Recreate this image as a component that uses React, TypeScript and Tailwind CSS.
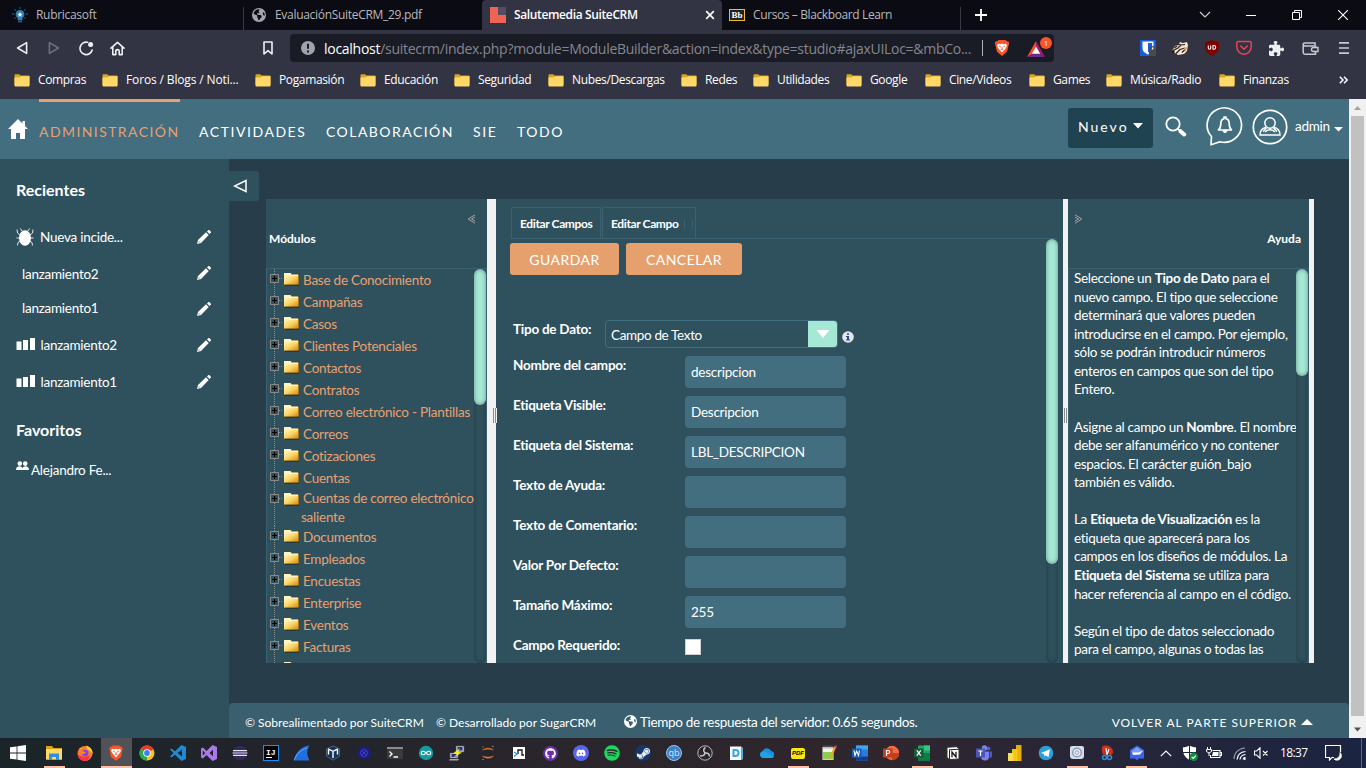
import type { ReactNode } from "react";
import { FaSpotify, FaDiscord, FaGithub, FaSteamSymbol, FaEarthAmericas, FaPuzzlePiece } from "react-icons/fa6";

type SvgProps = { w?: number; h?: number; vb?: string; className?: string; children: ReactNode };

function Svg({ w = 16, h = 16, vb, className = "", children }: SvgProps) {
  return (
    <svg width={w} height={h} viewBox={vb ?? `0 0 ${w} ${h}`} className={`shrink-0 ${className}`} fill="none">
      {children}
    </svg>
  );
}

/* ---------- Browser chrome ---------- */

function TabStrip() {
  return (
    <div className="flex h-[30px] shrink-0 bg-[#0b0b14] text-[12px] text-[#b9b9bd]">
      <div className="flex w-[243px] items-center pl-[12px]">
        <Svg>
          <path d="M8 0v2M2.6 2.2l1.3 1.3M13.4 2.2l-1.3 1.3M0 7h2.2M13.8 7H16M2.4 11.6l1.2-1M13.6 11.6l-1.2-1" stroke="#1d4e74" strokeWidth="1.3" />
          <path d="M8 3a4.3 4.3 0 0 0-2.4 7.9V13h4.8v-2.1A4.3 4.3 0 0 0 8 3z" fill="#2e7fb8" />
          <path d="M8 5l.8 1.7 1.7.1-1.3 1.2.4 1.8L8 8.9l-1.6.9.4-1.8-1.3-1.2 1.7-.1z" fill="#fff" />
          <path d="M6 13.4h4v2H6z" fill="#1d5f92" />
        </Svg>
        <span className="ml-[8px] tracking-[-0.3px]">Rubricasoft</span>
      </div>
      <div className="mt-[7px] w-px bg-[#3a3a45]" />
      <div className="flex w-[238px] items-center pl-[8px]">
        <FaEarthAmericas size={14} color="#a4a6ad" />
        <span className="ml-[9px] tracking-[-0.3px]">EvaluaciónSuiteCRM_29.pdf</span>
      </div>
      <div className="flex w-[240px] items-center rounded-t-[4px] bg-[#323443] pl-[8px] pr-[7px] font-semibold text-white">
        <Svg>
          <path d="M0 0h16v16H0z" fill="#ee6352" />
          <path d="M8 0h8v8H8z" fill="#544c63" />
        </Svg>
        <span className="ml-[8px] flex-1 tracking-[-0.37px]">Salutemedia SuiteCRM</span>
        <Svg w={10} h={10}>
          <path d="M1.2 1.2l7.6 7.6M8.8 1.2L1.2 8.8" stroke="#fff" strokeWidth="1.7" />
        </Svg>
      </div>
      <div className="flex w-[238px] items-center pl-[7px]">
        <div className="flex h-[12px] w-[16px] items-center justify-center border border-[#f0b73c] bg-[#222] font-['Liberation_Serif',serif] text-[9px] font-bold leading-none text-white">
          Bb
        </div>
        <span className="ml-[8px] tracking-[-0.39px]">Cursos – Blackboard Learn</span>
      </div>
      <div className="mt-[7px] w-px bg-[#3a3a45]" />
      <div className="flex flex-1 items-center pl-[14px]">
        <Svg w={12} h={12}>
          <path d="M6 0v12M0 6h12" stroke="#fff" strokeWidth="1.8" />
        </Svg>
        <Svg w={12} h={8} className="ml-[212px]">
          <path d="M1 1l5 5 5-5" stroke="#d0d0d4" strokeWidth="1.1" />
        </Svg>
        <Svg w={10} h={10} className="ml-[35px]">
          <path d="M0 5.5h10" stroke="#fff" />
        </Svg>
        <Svg w={10} h={10} className="ml-[36px]">
          <path d="M.5 2.5h7v7h-7zM2.5 2.5v-2h7v7h-2" stroke="#fff" />
        </Svg>
        <Svg w={10} h={10} className="ml-[36px]">
          <path d="M0 0l10 10M10 0L0 10" stroke="#fff" strokeWidth="1.1" />
        </Svg>
      </div>
    </div>
  );
}

function Toolbar() {
  return (
    <div className="flex h-[36px] shrink-0 items-center bg-[#323443]">
      <Svg w={12} h={14} className="ml-[16px]">
        <path d="M10.6 1.6v10.8L1.6 7z" stroke="#f0f0f2" strokeWidth="1.6" strokeLinejoin="round" />
      </Svg>
      <Svg w={12} h={14} className="ml-[20px]">
        <path d="M1.4 1.6v10.8L10.4 7z" stroke="#6e707c" strokeWidth="1.6" strokeLinejoin="round" />
      </Svg>
      <Svg w={15} h={15} className="ml-[19px]">
        <path d="M8.500 1.300A6.200 6.200 0 1 0 13.200 9" stroke="#f0f0f2" strokeWidth="1.6" strokeLinecap="round" />
        <circle cx="11.600" cy="3.400" r="2.500" fill="#f0f0f2" />
      </Svg>
      <Svg w={15} h={15} className="ml-[16px]">
        <path d="M1 7.2l6.5-5.9L14 7.2M2.8 6v7.6h3V10.300a1.700 1.700 0 0 1 3.400 0v3.300h3V6" stroke="#f0f0f2" strokeWidth="1.6" strokeLinecap="round" strokeLinejoin="round" />
      </Svg>
      <Svg w={10} h={14} className="ml-[138px]">
        <path d="M1 1h8v12l-4-3.400L1 13z" stroke="#f0f0f2" strokeWidth="1.6" strokeLinejoin="round" />
      </Svg>
      <div className="ml-[17px] flex h-[28px] w-[764px] items-center rounded-[4px] bg-[#1a1c25] pl-[11px]">
        <Svg w={14} h={14}>
          <circle cx="7" cy="7" r="7" fill="#a0a2ac" />
          <path d="M7 2.800v5M7 9.400v2" stroke="#1a1c25" strokeWidth="2" />
        </Svg>
        <div className="ml-[9px] w-[658px] whitespace-nowrap text-[14px] tracking-[-0.28px] text-[#85868f]">
          <span className="text-white">localhost</span>
          /suitecrm/index.php?module=ModuleBuilder&amp;action=index&amp;type=studio#ajaxUILoc=&amp;mbCo...
        </div>
        <div className="h-[16px] w-px bg-[#b0b1b8]" />
        <Svg w={16} h={18} className="ml-[11px]">
          <path d="M4.500 1h7l1.300 1.300 1.700.2.700 2-.7 2L13 12.800 8 17l-5-4.200L1.500 6.500l-.7-2 .7-2 1.700-.2z" fill="#fb542b" />
          <path d="M4 4.800l2.500.4L8 4.600l1.500.6 2.500-.4 1 2-1.800 3.200L8 13.500 4.800 10 3 6.800z" fill="#fff" />
          <path d="M5 7l1.800.8M11 7l-1.800.8M8 8v2M6.500 11L8 10l1.500 1" stroke="#fb542b" strokeWidth=".9" />
        </Svg>
        <div className="relative ml-[16px] h-[20px] w-[27px]">
          <Svg w={20} h={18} className="mt-[2px]">
            <path d="M10 1L1 17l9-5z" fill="#ff4724" />
            <path d="M10 1l9 16-9-5z" fill="#9e1f63" />
            <path d="M1 17h18l-9-5z" fill="#662d91" />
            <path d="M10 6.500l4.200 7.200H5.800z" fill="#fff" />
          </Svg>
          <div className="absolute -top-[1px] left-[14px] flex h-[12px] w-[12px] items-center justify-center rounded-full bg-[#fb542b] text-[8px] leading-none text-white">1</div>
        </div>
      </div>
      <Svg className="ml-[86px]">
        <path d="M0 0h16v16H0z" fill="#175ddc" />
        <path d="M2.500 1.500h11v7c0 3-3 4.800-5.500 6-2.500-1.200-5.500-3-5.500-6z" fill="#fff" />
        <path d="M8 3h4v5c0 2-2 3.500-4 4.500z" fill="#175ddc" />
        <path d="M9 9.500h7V16H9z" fill="#4a4a4a" />
        <path d="M10.700 10V8.500a1.800 1.800 0 0 1 3.600 0V10" stroke="#4a4a4a" strokeWidth="1.300" />
      </Svg>
      <Svg className="ml-[16px]">
        <path d="M0 11l3-5 3-1 2-3 3 1 4-1 1 3-1 6-3 3-6 1z" fill="#f4e3cf" />
        <path d="M1 10.500l5-2.500 3-3 4-.5M4 13.500l4-4 5-1.500M5.500 5l3-1M10 12.500l4-4M2.500 8l2.500-2" stroke="#2b211b" strokeWidth="1.200" />
        <path d="M0 10.500h2.500v2H0z" fill="#111" />
        <path d="M11.500 8.500l3.500-1.500-1.500 4.500z" fill="#d69a63" />
      </Svg>
      <Svg className="ml-[16px]">
        <path d="M8 0c2 1 4 2 7 2 0 7 0 10-7 14C1 12 1 9 1 2c3 0 5-1 7-2z" fill="#800000" />
        <path d="M4.300 5.500V8a1.200 1.200 0 0 0 2.400 0V5.500M9 5.500v3.800h.8a1.900 1.900 0 0 0 0-3.800z" stroke="#fff" strokeWidth="1.100" />
      </Svg>
      <Svg className="ml-[16px]">
        <path d="M2 1.500h12a1.200 1.200 0 0 1 1.200 1.200V7A7.200 7.200 0 0 1 .8 7V2.700A1.200 1.200 0 0 1 2 1.500z" stroke="#ef4056" strokeWidth="1.500" />
        <path d="M4.700 6L8 9.200 11.300 6" stroke="#ef4056" strokeWidth="1.600" strokeLinecap="round" strokeLinejoin="round" />
      </Svg>
      <FaPuzzlePiece size={15} color="#f0f0f2" className="ml-[17px] shrink-0" />
      <Svg w={17} h={15} className="ml-[18px]">
        <path d="M13 4V2H3a1.500 1.500 0 0 0-1.800 1.600V11.500A1.800 1.800 0 0 0 3 13.200h10.500V10M1.200 3.600C1.300 4.600 2 5 3 5h10.500v1.500" stroke="#c9cad0" strokeWidth="1.500" />
        <path d="M16 6.500h-4.500a2 2 0 0 0 0 4H16z" stroke="#c9cad0" strokeWidth="1.400" />
      </Svg>
      <Svg w={10} h={14} className="ml-[20px]">
        <path d="M0 1.800h10M0 7h10M0 12.200h10" stroke="#c9cad0" strokeWidth="1.700" />
      </Svg>
    </div>
  );
}

const bookmarks: { label: string; cls: string }[] = [
  { label: "Compras", cls: "w-[88px]" },
  { label: "Foros / Blogs / Noti...", cls: "w-[153px]" },
  { label: "Pogamasión", cls: "w-[105px]" },
  { label: "Educación", cls: "w-[94px]" },
  { label: "Seguridad", cls: "w-[94px]" },
  { label: "Nubes/Descargas", cls: "w-[133px]" },
  { label: "Redes", cls: "w-[72px]" },
  { label: "Utilidades", cls: "w-[93px]" },
  { label: "Google", cls: "w-[79px]" },
  { label: "Cine/Videos", cls: "w-[104px]" },
  { label: "Games", cls: "w-[77px]" },
  { label: "Música/Radio", cls: "w-[113px]" },
  { label: "Finanzas", cls: "w-[118px]" },
];

function BookmarksBar() {
  return (
    <div className="flex h-[33px] shrink-0 items-center bg-[#323443] pb-[5px] pl-[14px] text-[12px] text-white">
      {bookmarks.map((b) => (
        <div key={b.label} className={`flex shrink-0 items-center ${b.cls}`}>
          <Svg w={16} h={13}>
            <path d="M.5 1A.8.8 0 0 1 1.300.3h3.900L6.500 1.500h8.200a.8.8 0 0 1 .8.800V11H.5z" fill="#d9a420" />
            <path d="M.5 3.500L6 3.200l1-.9h8.500v9.400a.8.8 0 0 1-.8.800H1.300a.8.8 0 0 1-.8-.8z" fill="#ffd867" />
          </Svg>
          <span className={b.label.startsWith("Foros") ? "ml-[8px] whitespace-nowrap tracking-[-0.14px]" : "ml-[8px] whitespace-nowrap tracking-[-0.36px]"}>{b.label}</span>
        </div>
      ))}
      <Svg w={9} h={8} className="ml-[2px]">
        <path d="M.8.8L4 4 .8 7.200M5 .8L8.200 4 5 7.200" stroke="#fff" strokeWidth="1.500" />
      </Svg>
    </div>
  );
}

/* ---------- Application header ---------- */

function NavBar() {
  return (
    <div className="flex h-[60px] shrink-0 items-start bg-[#426e80] text-[14px] leading-[20px] text-white">
      <Svg w={20} h={20} className="ml-[8px] mt-[20px]">
        <path d="M10 0L0 10h3v10h5v-6h4v6h5V10h3L17 7V2h-2.500v2.500z" fill="#fff" />
      </Svg>
      <div className="ml-[11px] w-[141px] whitespace-nowrap border-t-[3px] border-[#e8a071] pt-[20px] tracking-[1.420px] text-[#e8a071]">ADMINISTRACIÓN</div>
      <div className="ml-[19px] w-[127px] whitespace-nowrap pt-[23px] tracking-[1.550px]">ACTIVIDADES</div>
      <div className="w-[147px] whitespace-nowrap pt-[23px] tracking-[1.450px]">COLABORACIÓN</div>
      <div className="w-[44px] pt-[23px] tracking-[1.600px]">SIE</div>
      <div className="flex-1 pt-[23px] tracking-[1.500px]">TODO</div>
      <div className="mt-[9px] flex h-[40px] w-[85px] items-center rounded-[3px] bg-[#204352] pl-[10px] pb-[3px] tracking-[2px]">
        <span className="w-[55px]">Nuevo</span>
        <Svg w={10} h={6} className="mb-[1px]">
          <path d="M0 0h10L5 5.500z" fill="#fff" />
        </Svg>
      </div>
      <Svg w={22} h={22} className="ml-[12px] mt-[17px]">
        <circle cx="8" cy="8" r="6.700" stroke="#fff" strokeWidth="1.800" />
        <path d="M12.800 12.800l2.200 2" stroke="#fff" strokeWidth="1.800" />
        <path d="M15.500 15.200l3.700 3.300" stroke="#fff" strokeWidth="4" strokeLinecap="round" />
      </Svg>
      <Svg w={38} h={42} className="ml-[19px] mt-[7px]">
        <path d="M5.500 30.500A17.200 17.200 0 1 1 14 35.700L5 38.800z" stroke="#fff" strokeWidth="1.700" strokeLinejoin="round" />
        <path d="M12.500 24c2-1.700 2.200-3.300 2.300-6.300.1-2.800 1.400-4.600 3.200-5V11h2v1.700c1.800.4 3.100 2.200 3.200 5 .1 3 .3 4.600 2.300 6.300z" stroke="#fff" strokeWidth="1.700" strokeLinejoin="round" />
        <path d="M17 24.500h4a2 2 0 0 1-4 0z" fill="#fff" stroke="#fff" />
      </Svg>
      <Svg w={36} h={36} className="ml-[8px] mt-[10px]">
        <circle cx="18" cy="18" r="16.700" stroke="#fff" strokeWidth="1.700" />
        <circle cx="18" cy="14" r="5.200" stroke="#fff" strokeWidth="1.500" />
        <path d="M14 18.200c-4 1-6 4-6 7.800h20c0-3.800-2-6.800-6-7.800M11 22.500l3.500-3.500M25 22.500L21.500 19M13 23c2-3 8-3 10 0" stroke="#fff" strokeWidth="1.400" />
      </Svg>
      <span className="ml-[7px] w-[39px] pt-[17px] text-[13.500px] tracking-[-0.250px]">admin</span>
      <Svg w={9} h={5} className="mr-[6px] mt-[28px]">
        <path d="M0 0h9L4.500 4.500z" fill="#fff" />
      </Svg>
    </div>
  );
}

/* ---------- Sidebar ---------- */

function Pencil() {
  return (
    <Svg w={14} h={14}>
      <path d="M0 14l1-4L9 2.300l2.700 2.700L4 13z" fill="#fff" />
      <path d="M10 1.400L11.200.3c.4-.3.900-.3 1.300 0l1.200 1.200c.4.400.4.900 0 1.300l-1.100 1.200z" fill="#fff" />
      <path d="M1.300 12.700l.6-1.500.9.900z" fill="#2f515d" />
    </Svg>
  );
}

function Bars() {
  return (
    <Svg w={20} h={13} className="mr-[5px]">
      <path d="M.5 3.500h5V12h-5zM7 2h5v10H7zM14 0h5v12h-5z" fill="#fff" />
    </Svg>
  );
}

function Bug() {
  return (
    <Svg w={18} h={18} className="mr-[6px]">
      <ellipse cx="9" cy="10" rx="6" ry="7.800" fill="#fff" />
      <path d="M6 3L4.500.500M12 3L13.500.500M4 7L1.500 5 1 1.500M14 7l2.500-2L17 1.500M4 10H.5M14 10h3.500M4.500 13L2 14.500l-.5 3M13.500 13l2.500 1.500.5 3" stroke="#fff" strokeWidth="1" opacity=".85" />
    </Svg>
  );
}

function Recent({ cls, icon, label, low }: { cls: string; icon?: ReactNode; label: string; low?: boolean }) {
  return (
    <div className={`flex items-center pr-[18px] ${cls}`}>
      {icon}
      <span className={low ? "flex-1 pt-[2px]" : "flex-1"}>{label}</span>
      <Pencil />
    </div>
  );
}

function Sidebar() {
  return (
    <div className="flex w-[229px] shrink-0 flex-col bg-[#2f515d] text-[13.500px] tracking-[-0.250px] text-white">
      <div className="mt-[21px] h-[20px] pl-[16px] text-[16px] font-bold leading-[20px] tracking-normal">Recientes</div>
      <Recent cls="mt-[19px] h-[36px] pl-[16px]" icon={<Bug />} label="Nueva incide..." />
      <Recent cls="h-[36px] pl-[22px]" label="lanzamiento2" low />
      <Recent cls="h-[35px] pl-[22px]" label="lanzamiento1" />
      <Recent cls="h-[37px] pl-[15.500px]" icon={<Bars />} label="lanzamiento2" low />
      <Recent cls="h-[37px] pl-[15.500px]" icon={<Bars />} label="lanzamiento1" low />
      <div className="mt-[20px] h-[20px] pl-[16px] text-[16px] font-bold leading-[20px] tracking-normal">Favoritos</div>
      <div className="mt-[20px] flex h-[20px] items-center pl-[16px]">
        <Svg w={13} h={10} className="mb-[8px] mr-[2px]">
          <circle cx="3.800" cy="2.600" r="2.300" fill="#fff" />
          <circle cx="9.200" cy="2.600" r="2.300" fill="#fff" />
          <path d="M0 9c0-2.500 1.500-3.700 3.300-3.700 1.400 0 2.500.7 3.200 1.700.7-1 1.800-1.700 3.200-1.700C11.500 5.300 13 6.500 13 9z" fill="#fff" />
        </Svg>
        Alejandro Fe...
      </div>
    </div>
  );
}

/* ---------- Module tree ---------- */

const modules = [
  "Base de Conocimiento", "Campañas", "Casos", "Clientes Potenciales", "Contactos", "Contratos",
  "Correo electrónico - Plantillas", "Correos", "Cotizaciones", "Cuentas", "Cuentas de correo electrónico",
  "Documentos", "Empleados", "Encuestas", "Enterprise", "Eventos", "Facturas", "",
];

function TreeNode({ label }: { label: string }) {
  const wraps = label === "Cuentas de correo electrónico";
  return (
    <div className={wraps ? "flex h-[37px] shrink-0 items-start" : "flex h-[22px] shrink-0 items-start"}>
      <Svg w={33} h={wraps ? 37 : 22}>
        <path d={wraps ? "M7.500 0v37M12 9.500h4" : "M7.500 0v22M12 9.500h4"} stroke="#878f92" strokeDasharray="1 1" />
        <path d="M3.500 5.500h8v8h-8z" fill="#2f515d" stroke="#8a8a8a" />
        <path d="M5 9.500h5M7.500 7v5" stroke="#000" />
        <path d="M18 6.500h14v10H18z" fill="#221c10" />
        <path d="M17 4h7l1 1.700h7V15.500H17z" fill="#a9761c" />
        <path d="M17 4h6.500l1 1.600H31v1.800H17z" fill="#fff3c4" />
        <path d="M17 7h14v8.500H17z" fill="url(#folderFill)" />
      </Svg>
      {wraps ? (
        <div className="whitespace-nowrap pl-[3px] leading-[18.570px]">
          {label}
          <div className="-ml-[2px]">saliente</div>
        </div>
      ) : (
        <div className="whitespace-nowrap pl-[3px] leading-[22px]">{label}</div>
      )}
    </div>
  );
}

function ScrollBar({ thumb }: { thumb: string }) {
  return (
    <div className="w-[12px] shrink-0 rounded-[6px] shadow-[inset_0_0_5px_rgba(0,0,0,0.3)]">
      <div className={`rounded-[6px] bg-[#a5e8d6] shadow-[inset_0_0_4px_rgba(0,0,0,0.4)] ${thumb}`} />
    </div>
  );
}

function Splitter({ cls, grip }: { cls: string; grip?: string }) {
  return (
    <div className={`relative shrink-0 bg-[#f2f2f2] ${cls}`}>
      {grip && (
        <div className={`absolute top-[209px] z-10 flex h-[15px] w-[4px] justify-between border-r border-[#f2f2f2] bg-[#f2f2f2] ${grip}`}>
          <div className="w-px bg-[#8c8c8c]" />
          <div className="w-px bg-[#8c8c8c]" />
        </div>
      )}
    </div>
  );
}

function ModulesPanel() {
  return (
    <div className="flex w-[221px] shrink-0 flex-col">
      <div className="flex h-[69px] shrink-0 items-start justify-between pl-[3px] pr-[11px]">
        <div className="mt-[30px] text-[12px] font-bold leading-[20px] text-white">Módulos</div>
        <Svg w={9} h={10} className="mt-[15px]">
          <path d="M8 .8L1.200 5 8 9.200M8 3L4.500 5 8 7" stroke="#a9a39a" />
        </Svg>
      </div>
      <div className="flex min-h-0 flex-1 border-x border-t border-[#3a6272]">
        <div className="flex w-[207px] flex-col overflow-hidden text-[13.500px] tracking-[-0.240px] text-[#e8a071]">
          {modules.map((m) => (
            <TreeNode key={m} label={m} />
          ))}
        </div>
        <ScrollBar thumb="h-[136px]" />
      </div>
    </div>
  );
}

/* ---------- Field editor ---------- */

const fields = [
  ["Nombre del campo:", "descripcion"],
  ["Etiqueta Visible:", "Descripcion"],
  ["Etiqueta del Sistema:", "LBL_DESCRIPCION"],
  ["Texto de Ayuda:", ""],
  ["Texto de Comentario:", ""],
  ["Valor Por Defecto:", ""],
  ["Tamaño Máximo:", "255"],
];

function EditorPanel() {
  return (
    <div className="flex w-[567px] shrink-0 flex-col text-white">
      <div className="flex h-[40px] shrink-0 items-end pl-[15px] pr-[6px]">
        <div className="flex h-[32px] w-full border-b border-[#3a6272] text-[12px] font-bold tracking-[-0.380px]">
          <div className="flex w-[90px] items-center rounded-t-[2px] border-x border-t border-[#3a6272] pl-[8px] pt-[2px]">Editar Campos</div>
          <div className="ml-px flex w-[94px] items-center rounded-t-[2px] border-x border-t border-[#3a6272] pl-[8px] pt-[2px]">
            <span className="flex-1 whitespace-nowrap">Editar Campo</span>
            <div className="mr-[2px] flex h-[9px] w-[9px] border-x border-[#3a6272]" />
          </div>
        </div>
      </div>
      <div className="flex min-h-0 flex-1 justify-between pl-[14px] pr-[5px]">
        <div className="w-[400px] overflow-hidden text-[13.500px] tracking-[-0.250px]">
          <div className="mt-[4px] flex gap-[7px] text-[14px] tracking-[0.450px]">
            <div className="flex h-[32px] w-[109px] items-center justify-center rounded-[3px] bg-[#e6a06e]">GUARDAR</div>
            <div className="flex h-[32px] w-[116px] items-center justify-center rounded-[3px] bg-[#e6a06e]">CANCELAR</div>
          </div>
          <div className="mt-[45px] flex h-[36px] items-start pl-[3px]">
            <div className="w-[92px] font-bold leading-[18px]">Tipo de Dato:</div>
            <div className="flex h-[28px] w-[233px] rounded-[4px] border border-[#426e80]">
              <div className="flex flex-1 items-center pl-[5px] pt-[3px] tracking-[-0.350px]">Campo de Texto</div>
              <div className="flex w-[29px] items-center justify-center rounded-r-[3px] bg-[#a5e8d6]">
                <Svg w={14} h={8}>
                  <path d="M.5 0h13L7 8z" fill="#fff" />
                </Svg>
              </div>
            </div>
            <Svg w={12} h={12} className="ml-[4px] mt-[11px]">
              <circle cx="6" cy="6" r="5.800" fill="#e6e6e6" />
              <path d="M5 2.200h2v1.600H5zM4 5h3v3.500h1v1H4v-1h1V6H4z" fill="#27479b" />
            </Svg>
          </div>
          {fields.map(([label, value]) => (
            <div key={label} className="flex h-[40px] items-start pl-[3px]">
              <div className="w-[172px] font-bold leading-[18px]">{label}</div>
              <div className="flex h-[32px] w-[161px] items-center rounded-[4px] bg-[#426e80] pl-[6px] pt-px">{value}</div>
            </div>
          ))}
          <div className="flex items-start pl-[3px]">
            <div className="w-[172px] font-bold leading-[18px]">Campo Requerido:</div>
            <div className="mt-[3px] h-[16px] w-[16px] border border-[#d0d0d0] bg-white" />
          </div>
        </div>
        <ScrollBar thumb="h-[325px]" />
      </div>
    </div>
  );
}

/* ---------- Help ---------- */

const help: ReactNode[] = [
  <>Seleccione un <b>Tipo de Dato</b> para el</>,
  "nuevo campo. El tipo que seleccione",
  "determinará que valores pueden",
  "introducirse en el campo. Por ejemplo,",
  "sólo se podrán introducir números",
  "enteros en campos que son del tipo",
  "Entero.",
  "",
  <>Asigne al campo un <b>Nombre</b>. El nombre</>,
  "debe ser alfanumérico y no contener",
  "espacios. El carácter guión_bajo",
  "también es válido.",
  "",
  <>La <b>Etiqueta de Visualización</b> es la</>,
  "etiqueta que aparecerá para los",
  "campos en los diseños de módulos. La",
  <><b>Etiqueta del Sistema</b> se utiliza para</>,
  "hacer referencia al campo en el código.",
  "",
  "Según el tipo de datos seleccionado",
  "para el campo, algunas o todas las",
];

function HelpPanel() {
  return (
    <div className="flex w-[241px] shrink-0 flex-col text-white">
      <div className="flex h-[69px] shrink-0 items-start justify-between pl-[6px] pr-[8px]">
        <Svg w={9} h={10} className="mt-[15px]">
          <path d="M1 .8L7.800 5 1 9.200M1 3l3.500 2L1 7" stroke="#a9a39a" />
        </Svg>
        <div className="mt-[30px] text-[12px] font-bold leading-[20px]">Ayuda</div>
      </div>
      <div className="flex min-h-0 flex-1 border-x border-t border-[#3a6272]">
        <div className="w-[227px] overflow-hidden pl-[5px] text-[13.500px] tracking-[-0.310px]">
          {help.map((line, i) => (
            <div key={i} className="h-[18.570px] whitespace-nowrap leading-[18.570px]">{line}</div>
          ))}
        </div>
        <ScrollBar thumb="h-[107px]" />
      </div>
    </div>
  );
}

/* ---------- Taskbar ---------- */

const taskIcons: { icon: ReactNode; open?: boolean; active?: boolean }[] = [
  { open: true, icon: <Svg><path d="M0 1h6l1.500 2H16v12H0z" fill="#e0a010" /><path d="M0 4h16v10H0z" fill="#ffd867" /><path d="M3 15V8.500h10V15h-3v-3H6v3z" fill="#2f8fe0" /></Svg> },
  { icon: <Svg><circle cx="8" cy="8.500" r="7.500" fill="#ff7a2a" /><path d="M2 4c1-1 2-1 3 0M9 .5c4 1 7 4 6.500 9-1-3-3-4-5-5z" fill="#ffd23c" /><path d="M8 16a7.500 7.500 0 0 1-7.500-7c2 3 9 4 12 1 .5 3-2 6-4.500 6z" fill="#ff2f55" /><circle cx="8.200" cy="8" r="3.200" fill="#7a4be0" /><path d="M4 7c2-1 3 0 5 .5L6 9z" fill="#ff9d2a" /></Svg> },
  { open: true, active: true, icon: <BraveLion /> },
  { icon: <Svg><circle cx="8" cy="8" r="7.500" fill="#fbc116" /><path d="M8 8L1.500 4.200A7.500 7.500 0 0 1 14.500 4.200z" fill="#e33b2e" /><path d="M1.500 4.200L8 8l0 7.500A7.500 7.500 0 0 1 1.500 4.200z" fill="#2da94f" /><circle cx="8" cy="8" r="3.800" fill="#fff" /><circle cx="8" cy="8" r="2.900" fill="#3c7ff0" /></Svg> },
  { icon: <Svg><path d="M11.500 0L16 2v12l-4.500 2L5 9.800 1.500 12.500 0 11.500 3.500 8 0 4.500l1.500-1L5 6.200z" fill="#1f8ad2" /><path d="M12 4.500v7L7.500 8z" fill="#1c2428" /></Svg> },
  { icon: <Svg><path d="M11.500 0L16 2v12l-4.500 2-6-6L2 13.500l-2-1v-9l2-1L5.500 6z" fill="#a97ae8" /><path d="M12 4.800v6.400L8.500 8zM1.800 5.500v5L4.200 8z" fill="#1c2428" /></Svg> },
  { icon: <Svg><circle cx="8" cy="8" r="7.300" fill="#33295c" /><path d="M1 5.700h14M.6 8h14.800M1 10.300h14" stroke="#e8e6f2" strokeWidth="1.200" /></Svg> },
  { icon: <div className="flex h-[16px] w-[16px] flex-col justify-center border border-[#1f8cf5] bg-black pl-[2px] font-['Liberation_Mono',monospace] text-[8px] font-bold leading-[7px] text-white">IJ<div className="mt-[1px] h-px w-[6px] bg-white" /></div> },
  { icon: <Svg><path d="M0 15.500C1.500 7 7 1.500 15.500.500 12.500 5 12.500 10 15.500 15.500z" fill="#1e6fe0" /><path d="M0 15.500C2 9 8 4 13 3" stroke="#7fb4f5" strokeWidth=".8" /></Svg> },
  { icon: <Svg><path d="M8 .8l6.500 3v7.400L8 15.200l-6.500-4V3.800z" fill="#16335c" stroke="#5d7594" strokeWidth=".7" /><path d="M3 3.800l5 2.500 5-2.500M8 6.300V13M3.500 5v4.500M12.500 5v4.500" stroke="#fff" strokeWidth="1.400" /></Svg> },
  { icon: <Svg><path d="M8 1l2 1.500 3-.5.5 3L15.500 8l-2 2.500-.5 3-3-.5L8 15l-2-2-3 .5-.5-3L.500 8l2-2.500L3 2l3 .5z" fill="#1c1c86" /><circle cx="8" cy="8" r="3.500" stroke="#3f41c4" /><path d="M6 6l4 4M10 6l-4 4" stroke="#3f41c4" /></Svg> },
  { icon: <Svg><path d="M0 2h16v12H0z" fill="#3a3a3a" /><path d="M0 2h16v2H0z" fill="#8a8a8a" /><path d="M2.500 6.500L5 9l-2.500 2.500M6.500 12H11" stroke="#fff" strokeWidth="1.300" /></Svg> },
  { icon: <Svg><circle cx="8" cy="8" r="7.200" fill="#159ba0" /><path d="M8 8c-1.500-2-4.700-2.600-4.700 0S6.500 10 8 8s4.700-2.600 4.700 0S9.500 10 8 8z" stroke="#fff" strokeWidth="1.100" /></Svg> },
  { icon: <Svg><path d="M7 1h8v6H7zM1 8h8v5H1z" fill="#c9ccd4" stroke="#555" strokeWidth=".6" /><path d="M8.500 2h5v3.500h-5zM2.500 9h5v3h-5z" fill="#26308c" /><path d="M1 14h9l-1 1.500H0z" fill="#aaa" /><path d="M11 3L4 8.500l4 .5-4 4L13 7.500 9 7z" fill="#f7ef1c" /></Svg> },
  { icon: <Svg><path d="M2.500 5C5 2.500 11 2.500 13.500 5 11 3.900 5 3.900 2.500 5zM2.500 11c2.500 3 8.500 3 11 0-3 1.300-8 1.300-11 0z" fill="#f37726" stroke="#f37726" strokeWidth=".4" /><circle cx="3" cy="2" r=".7" fill="#777" /><circle cx="12.800" cy="1.500" r=".8" fill="#999" /><circle cx="3" cy="14.500" r=".8" fill="#888" /></Svg> },
  { icon: <Svg><path d="M2 2h12v12H2z" fill="#fff" /><path d="M7 9V5h4v5h2" stroke="#111" strokeWidth="1.300" /><path d="M3 7l3 2-3 2.500M6 9l1.500-.5" stroke="#2490e8" strokeWidth="1.200" /></Svg> },
  { icon: <div className="flex h-[15px] w-[15px] items-center justify-center rounded-full bg-[#6a2fa8]"><FaGithub size={11} color="#fff" /></div> },
  { icon: <div className="flex h-[16px] w-[16px] items-center justify-center rounded-full bg-[#5865f2]"><FaDiscord size={10} color="#fff" /></div> },
  { icon: <FaSpotify size={16} color="#1ed760" /> },
  { icon: <div className="flex h-[16px] w-[16px] items-center justify-center rounded-full bg-[#14386b]"><FaSteamSymbol size={15} color="#e8eef5" /></div> },
  { icon: <div className="flex h-[16px] w-[16px] items-center justify-center rounded-full border border-[#9fc4ec] bg-[#3f7fc6] pb-[1px] text-[9px] leading-none text-[#d5e6f8]">qb</div> },
  { icon: <Svg><circle cx="8" cy="8" r="7.200" fill="#28262a" stroke="#b9b9b9" /><path d="M8 8C6 6 6.500 3.500 8.500 2.500M8 8c2.500-.5 4.500 1 4.500 3.500M8 8c-.5 2.500-3 3.500-5 2.500" stroke="#c9c9c9" strokeWidth="1.500" /></Svg> },
  { icon: <Svg><path d="M2 1.500h11.500V15H2z" fill="#f4f8fb" /><path d="M13.500 3L15 2v12l-1.500 1z" fill="#52b1dc" /><path d="M5.500 5h2a3 3 0 0 1 0 6h-2z" stroke="#3aa6db" strokeWidth="2" /></Svg> },
  { icon: <Svg><path d="M4 13a3.500 3.500 0 0 1-.500-6.800A4.800 4.800 0 0 1 12.200 6 3.600 3.600 0 0 1 12.500 13z" fill="#1490df" /><path d="M4 13a3.500 3.500 0 0 1-.500-6.800C7 6 9 9 15 11.500c-.5 1-1.500 1.500-2.500 1.500z" fill="#28a8ea" opacity=".7" /></Svg> },
  { open: true, icon: <div className="flex h-[11px] w-[14px] items-center justify-center rounded-[2px] bg-[#f5ea14] font-['Liberation_Sans',sans-serif] text-[6px] font-bold italic leading-none tracking-normal text-black">PDF</div> },
  { icon: <Svg><path d="M1.500 2h11v13h-11z" fill="#f4f4ee" /><path d="M2 7h10v7.500H2z" fill="#8ed04a" /><path d="M3 .5v3M5 .5v3M7 .5v3M9 .5v3M11 .5v3" stroke="#777" strokeWidth=".9" /><path d="M14.500 1.500L9 13" stroke="#f0a030" strokeWidth="2" /><path d="M15.200.500l-1 2.200" stroke="#d33" strokeWidth="2" /></Svg> },
  { icon: <Svg><path d="M4 .5h12v15H4z" fill="#2b7cd3" /><path d="M4 .5h12v4H4z" fill="#41a5ee" /><path d="M4 11.500h12v4H4z" fill="#103f91" /><path d="M0 3.500h9.500v9H0z" fill="#185abd" /><path d="M2 5.500l1 5 1.700-4.500L6.500 10.500l1-5" stroke="#fff" strokeWidth="1.100" /></Svg> },
  { icon: <Svg><circle cx="9" cy="8" r="7.200" fill="#ed6c47" /><path d="M9 8h7.200A7.200 7.200 0 0 1 9 15.200z" fill="#c43e1c" /><path d="M0 3.500h9.500v9H0z" fill="#c43e1c" /><path d="M3.500 11V5.500h1.700a1.500 1.500 0 0 1 0 3H3.500" stroke="#fff" strokeWidth="1.200" /></Svg> },
  { open: true, icon: <Svg><path d="M4 .5h12v15H4z" fill="#21a366" /><path d="M10 .5h6v5h-6z" fill="#33c481" /><path d="M4 8h12v7.500H4z" fill="#107c41" /><path d="M0 3.500h9.500v9H0z" fill="#185c37" /><path d="M2.800 5.300l4 5.400M6.800 5.300l-4 5.400" stroke="#fff" strokeWidth="1.200" /></Svg> },
  { icon: <Svg><path d="M2 2.300l9.500-.6L14 3.500v10.500l-9.500.6L2 12.500z" fill="#fff" stroke="#333" strokeWidth="1" /><path d="M4.500 4.800l9.500-.6M4.500 4.500v10" stroke="#222" /><path d="M7 12.300V7l4 5V6.700" stroke="#111" strokeWidth="1.300" /></Svg> },
  { icon: <Svg><circle cx="12.500" cy="3.500" r="2" fill="#5059c9" /><circle cx="8.500" cy="3" r="2.700" fill="#7b83eb" /><path d="M5 6.500h8v5a4 4 0 0 1-8 0z" fill="#7b83eb" /><path d="M13.500 6.500H16v4a2.500 2.500 0 0 1-2.500 2.500z" fill="#5059c9" /><path d="M0 3.500h9v9H0z" fill="#4b53bc" /><path d="M2.300 6h4.400M4.500 6v5" stroke="#fff" strokeWidth="1.200" /></Svg> },
  { icon: <Svg><path d="M9 0h5.500v16H9z" fill="#e6ad10" /><path d="M5 4h5.500v12H5z" fill="#f2c811" /><path d="M1 8h5.500v8H1z" fill="#f9dc5c" /></Svg> },
  { icon: <Svg><circle cx="8" cy="8" r="7.300" fill="#2a9fd8" /><path d="M3 8l9-3.700-1.500 8-2.700-2L6.500 11.500 6 9z" fill="#fff" /></Svg> },
  { open: true, icon: <Svg><path d="M3 1h10a2 2 0 0 1 2 2v8a3 3 0 0 1-3 3H4a3 3 0 0 1-3-3V3a2 2 0 0 1 2-2z" fill="#d5dbe8" /><circle cx="8" cy="7.500" r="4.300" fill="#eef1f7" stroke="#8e9cba" strokeWidth="1.500" /><circle cx="8" cy="7.500" r="1.800" stroke="#8e9cba" /></Svg> },
  { icon: <Svg><path d="M3.500 1C7-.5 13 1 14 6c.3 3-1 4-2.500 4L9 8.500 8 10 4 9.500C2.500 7 2.500 3 3.500 1z" fill="#c9331c" /><path d="M7 3l1 7M10 4L8 10" stroke="#e9eef5" strokeWidth="1.200" /><circle cx="5.500" cy="12.500" r="2" stroke="#2f8fd8" strokeWidth="1.500" /><circle cx="10.500" cy="12.500" r="2" stroke="#2f8fd8" strokeWidth="1.500" /></Svg> },
  { open: true, icon: <Svg><path d="M8 .5l7 4.500v8.500H10L8 15.500 6 13.500H1V5z" fill="#3f63ea" /><path d="M2 6.500L8 2l6 4.500L9 9H6z" fill="#7aa0fb" /><path d="M3 7.500h7l4-2-3 4-7 .5z" fill="#fff" /></Svg> },
];

function BraveLion() {
  return (
    <Svg>
      <path d="M4.700.500h6.600l1.200 1.300 1.500.2.800 1.800-.6 2L13 12 8 15.800 3 12 1.800 5.800l-.6-2L2 2l1.500-.2z" fill="#fb542b" />
      <path d="M4 3.800l2.500.4L8 3.700l1.500.5 2.500-.4 1 2-1.800 3L8 12.500 4.800 8.800 3 5.800z" fill="#fff" />
      <path d="M5 6l1.800.8M11 6l-1.800.8M8 7v2M6.500 10L8 9l1.500 1" stroke="#fb542b" strokeWidth=".9" />
    </Svg>
  );
}

function Taskbar() {
  return (
    <div className="flex h-[30px] shrink-0 items-center bg-gradient-to-r from-[#1a2429] via-[#30262d] via-[63%] to-[#1b2442]">
      <div className="flex w-[38.500px] shrink-0 pl-[10px]">
        <Svg>
          <path d="M0 2.300l6.600-.9v6.200H0zM7.400 1.300L16 0v7.600H7.400zM0 8.400h6.600v6.200L0 13.700zM7.400 8.400H16V16l-8.600-1.200z" fill="#fff" />
        </Svg>
      </div>
      {taskIcons.map((t, i) => (
        <div key={i} className={`flex h-[30px] shrink-0 flex-col items-center ${i > 33 ? "w-[29.500px]" : "w-[31px]"} ${t.active ? "bg-[#505257]" : ""}`}>
          <div className="flex h-[28px] items-center pt-[2px]">{t.icon}</div>
          {t.open && <div className={`h-[2px] bg-[#fcc0a8] ${t.active ? "w-full" : "w-[21px]"}`} />}
        </div>
      ))}
      <div className="flex h-full flex-1 items-center pl-[8.500px] text-white">
        <Svg w={12} h={7}>
          <path d="M.8 6.200L6 1l5.200 5.200" stroke="#fff" strokeWidth="1.200" />
        </Svg>
        <Svg className="ml-[10px]">
          <path d="M7.500.500c2 1.200 4 1.800 6.500 1.800C14.500 8 13 12 7.500 15 2 12 .5 8 1 2.300c2.500 0 4.500-.6 6.500-1.800z" fill="#fff" />
          <path d="M7.500 0v15M0 7.500h14" stroke="#1b2440" />
          <circle cx="11.800" cy="11.800" r="4.200" fill="#138a3e" />
          <path d="M9.700 11.900l1.500 1.500 2.600-2.800" stroke="#fff" strokeWidth="1.100" />
        </Svg>
        <Svg w={16} h={12} className="ml-[8px]">
          <path d="M6.500 3.500H14v7H4.500V8M14.500 5.500h1v3h-1" stroke="#fff" strokeWidth="1.100" />
          <path d="M7 5h5.500v4H6z" fill="#fff" />
          <path d="M1.500 0v2M4.500 0v2M.5 2.500h5v2L3 6 .5 4.500zM3 6v3" stroke="#fff" />
        </Svg>
        <Svg w={14} h={13} className="ml-[11px]">
          <path d="M1 12C1 6 5.500 1.500 12 1" stroke="#8d94a6" strokeWidth="1.200" />
          <path d="M4 12.500C4.500 8 7.500 5 12.500 4.500M7 12.500c.3-2.800 2.500-4.700 5.500-5M10 12.500c.2-1.200 1-2 2.500-2.200" stroke="#fff" strokeWidth="1.200" />
          <circle cx="11.800" cy="12" r="1" fill="#fff" />
        </Svg>
        <Svg w={15} h={12} className="ml-[7px]">
          <path d="M.5 4h2.200L6 .8v10.400L2.700 8H.500zM9 4l4.500 4.500M13.500 4L9 8.500" stroke="#fff" strokeWidth="1.100" />
        </Svg>
        <span className="ml-[11px] w-[45px] text-[12px] tracking-[-0.6px]">18:37</span>
        <Svg w={17} h={16} className="mb-[1px]">
          <path d="M9 12.500H7l-2.500 2.500v-2.500H.5V.5h15V7" stroke="#fff" strokeWidth="1.200" />
          <path d="M15 7.500a5.500 5.500 0 0 1-6 6.500 4 4 0 0 0 6-6.500z" stroke="#fff" fill="#fff" strokeWidth=".8" />
        </Svg>
        <div className="ml-auto mr-[4px] h-full w-px bg-[#5b627a]" />
      </div>
    </div>
  );
}

/* ---------- Page ---------- */

export default function App() {
  return (
    <div className="flex h-[768px] w-[1366px] flex-col overflow-hidden font-['Open_Sans',sans-serif]">
      <svg width="0" height="0" className="absolute">
        <defs>
          <linearGradient id="folderFill" x1="0" y1="0" x2="1" y2="1">
            <stop offset="0.1" stopColor="#fff0b0" />
            <stop offset="0.5" stopColor="#f9d463" />
            <stop offset="1" stopColor="#d08a10" />
          </linearGradient>
        </defs>
      </svg>
      <TabStrip />
      <Toolbar />
      <BookmarksBar />
      <div className="flex min-h-0 flex-1 font-[Lato,sans-serif]">
        <div className="flex w-[1349px] shrink-0 flex-col">
          <NavBar />
          <div className="flex min-h-0 flex-1 bg-[#273e4a]">
            <Sidebar />
            <div className="flex min-w-0 flex-1 flex-col">
              <div className="flex h-[544px] shrink-0">
                <div className="mt-[12px] flex h-[30px] w-[30px] shrink-0 items-center rounded-r-[3px] bg-[#2f515d] pl-[4px]">
                  <Svg w={14} h={14}>
                    <path d="M13 1.500v11L1.500 7z" stroke="#fff" strokeWidth="1.500" />
                  </Svg>
                </div>
                <div className="ml-[7px] mt-[40px] flex h-[464px] w-[1048px] bg-[#2f515d]">
                  <ModulesPanel />
                  <Splitter cls="w-[9px]" grip="-right-px" />
                  <EditorPanel />
                  <Splitter cls="w-[5px]" grip="right-0" />
                  <HelpPanel />
                  <Splitter cls="w-[5px]" />
                </div>
              </div>
              <div className="flex flex-1 items-center rounded-t-[4px] bg-[#3a6070] pl-[16px] pt-[4px] text-white">
                <span className="w-[191px] text-[12px]">© Sobrealimentado por SuiteCRM</span>
                <span className="w-[188px] text-[12px]">© Desarrollado por SugarCRM</span>
                <FaEarthAmericas size={13} className="mb-[2px] mr-[3px]" />
                <span className="flex-1 pb-px text-[13.500px] tracking-[-0.320px]">Tiempo de respuesta del servidor: 0.65 segundos.</span>
                <span className="mr-[4px] text-[12px] tracking-[1px]">VOLVER AL PARTE SUPERIOR</span>
                <Svg w={12} h={6} className="mb-[2px] mr-[36px]">
                  <path d="M0 6h12L6 0z" fill="#fff" />
                </Svg>
              </div>
            </div>
          </div>
        </div>
        <div className="flex w-[17px] shrink-0 flex-col items-center bg-[#f1f1f1]">
          <Svg w={17} h={17}>
            <path d="M5 11h7L8.500 7z" fill="#a3a3a3" />
          </Svg>
          <div className="w-[13px] flex-1 bg-[#c1c1c1]" />
          <div className="h-[5px]" />
          <Svg w={17} h={17}>
            <path d="M5 6.500h7L8.500 10.500z" fill="#505050" />
          </Svg>
        </div>
      </div>
      <Taskbar />
    </div>
  );
}
